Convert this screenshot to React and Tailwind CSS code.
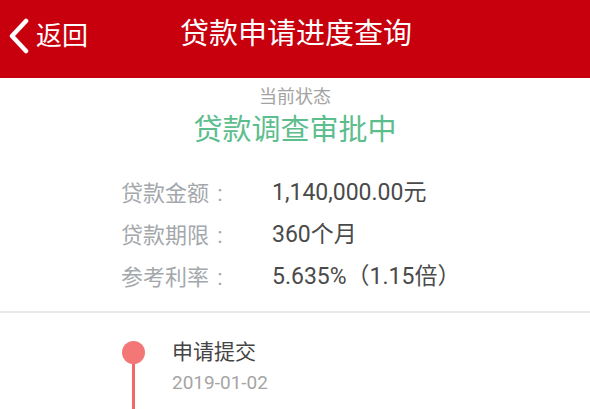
export default function App() {
    const font = { fontFamily: '"Roboto", "Noto Sans CJK SC", sans-serif' }
    const rows = [
        ["贷款金额", "1,140,000.00元"],
        ["贷款期限", "360个月"],
        ["参考利率", "5.635%（1.15倍）"],
    ]
    return (
        <div className="w-[590px] h-[409px] overflow-hidden bg-white" style={font}>
            {/* header */}
            <div className="h-[78px] bg-[#c8000e] grid grid-cols-[1fr_auto_1fr] items-center text-white">
                <div className="flex items-center pl-[7px]">
                    <svg width="24" height="36" viewBox="0 0 24 36" className="mb-[6px]">
                        <polyline points="19,3 5,18 19,33" fill="none" stroke="white" strokeWidth="4.5" strokeLinecap="round" strokeLinejoin="round" />
                    </svg>
                    <span className="text-[26px] leading-none ml-[5px] mb-[6px]">返回</span>
                </div>
                <div className="text-[29px] leading-none mb-[9px] pl-[2px]">贷款申请进度查询</div>
                <div></div>
            </div>

            {/* status */}
            <div className="flex flex-col items-center">
                <div className="mt-[8px] text-[18px] leading-[22px] text-[#a3a3a3]">当前状态</div>
                <div className="mt-[4px] text-[29px] leading-[36px] text-[#5cbd8d]">贷款调查审批中</div>
            </div>

            <div className="mt-[24px] pl-[121px] mb-[13px]">
                {rows.map((row, key) => (
                    <div key={key} className="flex items-center h-[42px]">
                        <div className="w-[151px] flex text-[22px] text-[#a4a8ac]">
                            {row[0]}
                            <span className="w-[22px] text-center">:</span>
                        </div>
                        <div className="text-[23px] text-[#4a4a4a]">{row[1]}</div>
                    </div>
                ))}
            </div>

            <div className="border-t-2 border-[#e9e9e9]"></div>

            {/* timeline */}
            <div className="flex pt-[25px]">
                <div className="ml-[122px] w-[23px] flex flex-col items-center">
                    <div className="mt-[3px] w-[23px] h-[23px] rounded-full bg-[#f47777]"></div>
                    <div className="w-[3px] flex-1 bg-[#ec6a6a]"></div>
                </div>
                <div className="ml-[27px] pb-[60px]">
                    <div className="text-[21px] leading-[28px] text-[#444444]">申请提交</div>
                    <div className="mt-[5px] text-[19px] leading-[24px] text-[#a5a5a5]">2019-01-02</div>
                </div>
            </div>
        </div>
    )
}
